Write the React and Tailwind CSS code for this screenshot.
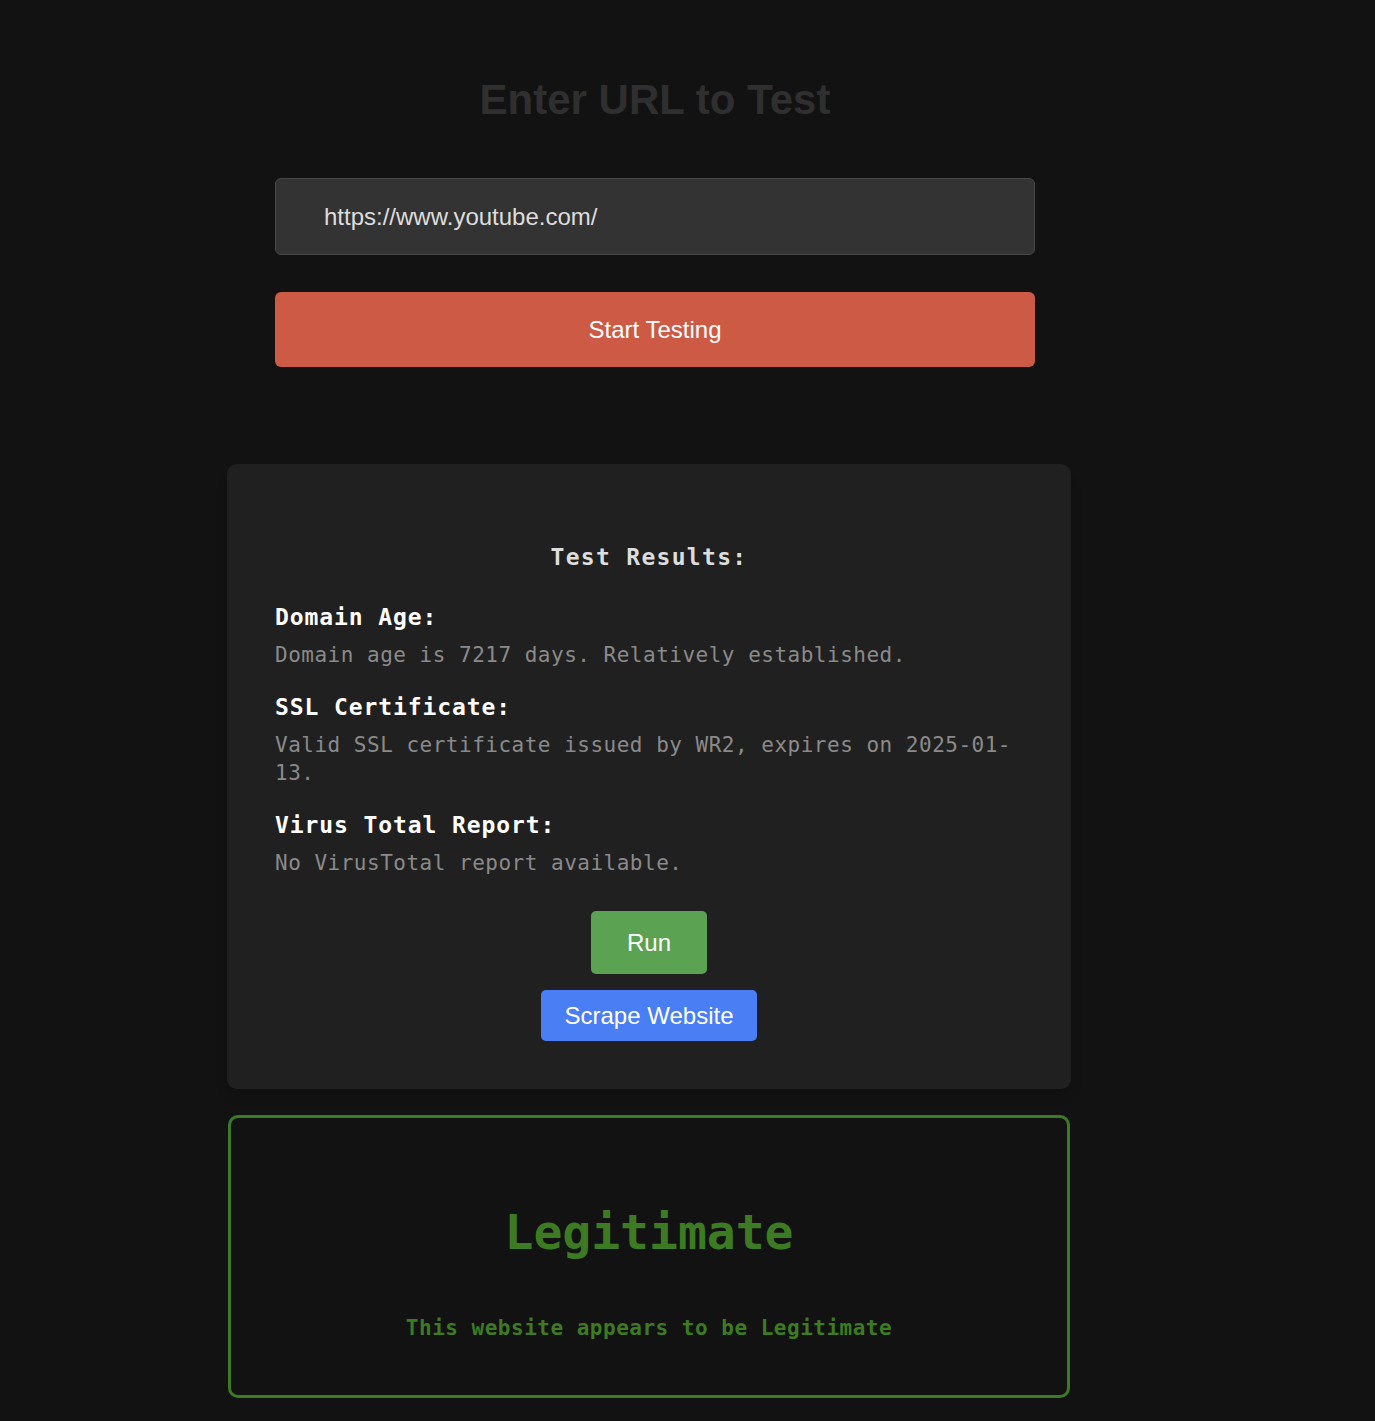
import React from "react";

const mono = "font-['DejaVu_Sans_Mono','Liberation_Mono',monospace]";

const results = [
  { label: "Domain Age:", text: "Domain age is 7217 days. Relatively established." },
  {
    label: "SSL Certificate:",
    text: (
      <>
        Valid SSL certificate issued by WR2, expires on 2025-01-<wbr />13.
      </>
    ),
  },
  { label: "Virus Total Report:", text: "No VirusTotal report available." },
];

export default function App() {
  return (
    <div className="min-h-[1421px] w-full bg-[#121212] font-['Liberation_Sans',Arial,sans-serif]">
      <div className="ml-[227px] w-[844px] pt-[76px]">
        {/* URL form */}
        <div className="ml-[48px] w-[760px]">
          <h1 className="text-center text-[42px] font-bold leading-[48px] text-[#2f2f2f]">
            Enter URL to Test
          </h1>
          <div className="mt-[54px] flex h-[77px] items-center rounded-md border border-[#474747] bg-[#333333] pl-[48px] text-[24px] text-[#dddddd]">
            https://www.youtube.com/
          </div>
          <button className="mt-[37px] flex h-[75px] w-full items-center justify-center rounded-md bg-[#cd5a45] text-[24px] text-white">
            Start Testing
          </button>
        </div>

        {/* Results card */}
        <div className={`mt-[97px] rounded-[10px] bg-[#202020] px-[48px] pt-[79px] pb-[48px] shadow-lg ${mono}`}>
          <h2 className="text-center text-[23px] font-bold leading-[28px] tracking-[1.3px] text-[#dddddd]">
            Test Results:
          </h2>
          <div className="mt-[32px] flex flex-col gap-[24px]">
            {results.map(({ label, text }) => (
              <div key={label}>
                <h3 className="text-[23px] font-bold leading-[28px] tracking-[0.9px] text-white">{label}</h3>
                <p className="mt-[10px] text-[21px] leading-[28px] tracking-[0.5px] text-[#8a8a8a]">{text}</p>
              </div>
            ))}
          </div>
          <div className="mt-[34px] flex flex-col items-center gap-[16px] font-['Liberation_Sans',Arial,sans-serif]">
            <button className="h-[63px] w-[116px] rounded-[5px] bg-[#5ba352] text-[24px] text-white">Run</button>
            <button className="h-[51px] w-[216px] rounded-[5px] bg-[#4a7ef5] text-[24px] text-white">Scrape Website</button>
          </div>
        </div>

        {/* Verdict */}
        <div className={`mt-[26px] mx-px rounded-[10px] border-[3px] border-[#3d7b22] pt-[86px] pb-[53px] text-center text-[#3d7b22] ${mono}`}>
          <div className="text-[48px] font-bold leading-[56px]">Legitimate</div>
          <p className="mt-[54px] text-[21px] font-bold leading-[28px] tracking-[0.5px]">
            This website appears to be Legitimate
          </p>
        </div>
      </div>
    </div>
  );
}
